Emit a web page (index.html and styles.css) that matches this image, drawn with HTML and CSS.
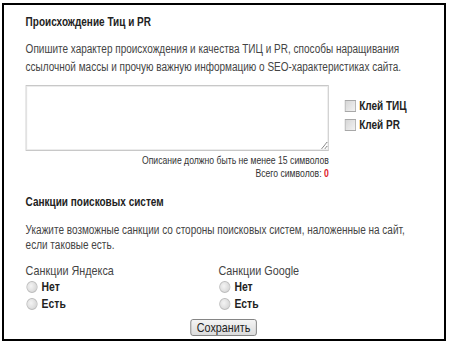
FILE: index.html
```html
<!DOCTYPE html>
<html lang="ru">

<head>
    <meta charset="UTF-8">
    <title>Происхождение Тиц и PR</title>
    <link rel="stylesheet" href="styles.css">
</head>

<body>
    <div class="frame">
        <form class="sheet" onsubmit="event.preventDefault();">
            <h3 class="title">Происхождение Тиц и PR</h3>
            <p class="hint">Опишите характер происхождения и качества ТИЦ и PR, способы наращивания ссылочной массы и прочую важную информацию о SEO-характеристиках сайта.</p>

            <div class="origin-row">
                <div class="text-col">
                    <textarea class="desc" id="desc"></textarea>
                    <div class="counter">
                        <div>Описание должно быть не менее 15 символов</div>
                        <div>Всего символов: <b class="count" id="count">0</b></div>
                    </div>
                </div>
                <div class="glue">
                    <label class="check"><input type="checkbox"> Клей ТИЦ</label>
                    <label class="check"><input type="checkbox"> Клей PR</label>
                </div>
            </div>

            <h3 class="title second">Санкции поисковых систем</h3>
            <p class="hint tight">Укажите возможные санкции со стороны поисковых систем, наложенные на сайт, если таковые есть.</p>

            <div class="sanctions">
                <div class="group">
                    <div class="group-name">Санкции Яндекса</div>
                    <label class="radio"><input type="radio" name="yandex"> Нет</label>
                    <label class="radio"><input type="radio" name="yandex"> Есть</label>
                </div>
                <div class="group">
                    <div class="group-name">Санкции Google</div>
                    <label class="radio"><input type="radio" name="google"> Нет</label>
                    <label class="radio"><input type="radio" name="google"> Есть</label>
                </div>
            </div>

            <div class="actions">
                <button type="submit" class="save">Сохранить</button>
            </div>
        </form>
    </div>

    <script>
        document.getElementById("desc").addEventListener("input", function () {
            document.getElementById("count").innerText = this.value.length;
        });
    </script>
</body>

</html>
```

FILE: styles.css
```css
body {
    margin: 0;
    padding: 3px 3px 4px 2px;
    background-color: #fff;
    font-family: "Liberation Sans", Arial, sans-serif;
    color: #333;
}

.frame {
    border: 2px solid #000;
    height: 338px;
    box-sizing: border-box;
    overflow: hidden;
}

/* the form is drawn narrow, like the original snapshot */
.sheet {
    width: 550px;
    box-sizing: border-box;
    padding: 9px 20px 0 27px;
    transform: scaleX(0.8);
    transform-origin: 0 0;
}

.title {
    margin: 0;
    font-size: 12.5px;
    line-height: 16px;
    font-weight: bold;
    color: #222;
}

.title.second {
    margin-top: 15px;
}

.hint {
    margin: 10px 0 0;
    font-size: 12.5px;
    line-height: 18px;
    color: #444;
}

.hint.tight {
    margin-top: 13px;
    line-height: 15px;
}

.origin-row {
    display: flex;
    margin-top: 9px;
}

.text-col {
    width: 379px;
}

.desc {
    display: block;
    width: 379px;
    height: 66px;
    box-sizing: border-box;
    border: 1px solid #c8c8c8;
    box-shadow: inset 0 0 0 1px #ececec;
    resize: both;
    margin: 0;
}

.counter {
    margin-top: 3px;
    text-align: right;
    font-size: 10.8px;
    line-height: 12.5px;
    color: #333;
}

.count {
    color: #e0202a;
}

.glue {
    padding: 11px 0 0 20px;
}

.check,
.radio {
    display: flex;
    align-items: center;
    gap: 4px;
    font-size: 12.5px;
    font-weight: bold;
    color: #222;
}

.check {
    height: 19px;
}

.check input {
    appearance: none;
    margin: 0;
    width: 14px;
    height: 12px;
    border: 1px solid #a8a8a8;
    background: linear-gradient(135deg, #d6d6d6, #f2f2f2);
}

.sanctions {
    display: flex;
    margin-top: 10px;
}

.group {
    width: 241px;
}

.group-name {
    font-size: 13.5px;
    line-height: 15px;
    color: #444;
}

.radio {
    height: 17px;
    font-size: 13px;
}

.radio input {
    appearance: none;
    margin: 0 1px;
    width: 14px;
    height: 12px;
    border: 1px solid #bcbcbc;
    border-radius: 50%;
    background: radial-gradient(circle at 40% 40%, #f4f4f4, #cfcfcf);
}

.actions {
    text-align: center;
    margin-top: 6px;
    margin-right: 8px;
}

.save {
    font-family: "Liberation Sans", Arial, sans-serif;
    font-size: 13.5px;
    line-height: 15px;
    padding: 0 7px;
    color: #222;
    border: 1px solid #777;
    border-radius: 3px;
    background: linear-gradient(#f4f4f4, #dcdcdc);
    cursor: pointer;
}
```
